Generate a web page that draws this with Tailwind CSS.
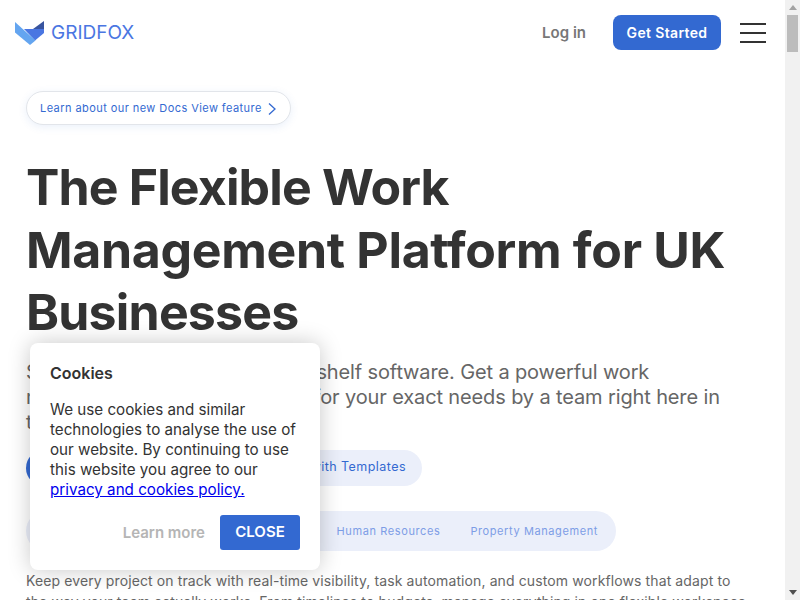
<!DOCTYPE html>
<html lang="en">
<head>
  <meta charset="UTF-8" />
  <title>Gridfox</title>
  <script src="https://cdn.jsdelivr.net/npm/@tailwindcss/browser@4"></script>
</head>
<body class="relative h-[600px] w-[800px] overflow-hidden bg-white font-['Inter',sans-serif] text-[#333]">
  <div class="h-[600px] w-[785px] overflow-hidden">
    <!-- nav -->
    <header class="flex h-[65px] items-center pl-[15px] pr-[19px]">
      <svg class="h-[24px] w-[29px]" viewBox="0 0 29 24">
        <polygon points="9,8 29,8 29,12 20,19.5" fill="#4a76e2" />
        <polygon points="18,8 29,0 29,8" fill="#38549f" />
        <polygon points="0,1 20.5,19.5 15,24 0,11.5" fill="#64a5f0" />
      </svg>
      <span class="ml-[7px] pt-[2px] text-[19px] text-[#4a76e2]">GRIDFOX</span>
      <a class="ml-auto pt-[1px] text-[15px] font-semibold text-[#777]">Log in</a>
      <a class="ml-[27px] flex h-[35px] w-[108px] items-center justify-center rounded-[8px] bg-[#3369d1] text-[14px] font-semibold tracking-[0.35px] text-white">Get Started</a>
      <div class="ml-[19px] flex w-[26px] flex-col gap-[7px]">
        <span class="h-[2px] bg-[#333]"></span>
        <span class="h-[2px] bg-[#333]"></span>
        <span class="h-[2px] bg-[#333]"></span>
      </div>
    </header>

    <main class="px-[26px] pt-[26px]">
      <a class="inline-flex h-[34px] items-center gap-[6px] rounded-full border border-[#e2e5ea] bg-white pl-[13px] pr-[14px] pt-[1px] text-[11px] tracking-[0.43px] text-[#3369d1] shadow-[0_2px_8px_rgba(51,105,209,0.1)]">
        Learn about our new Docs View feature
        <svg class="h-[12px] w-[8px]" viewBox="0 0 8 12" fill="none" stroke="#3369d1" stroke-width="1.3"><path d="M1 .5 7 6 1 11.5" /></svg>
      </a>

      <h1 class="mt-[31px] text-[50px] font-bold leading-[62.5px] text-[#333]">
        <span class="block tracking-[-0.86px]">The Flexible Work</span>
        <span class="block tracking-[-0.32px]">Management Platform for UK</span>
        <span class="block tracking-[-0.8px]">Businesses</span>
      </h1>

      <p class="mt-[16px] max-w-[700px] text-[20px] leading-[25px] tracking-[-0.13px] text-[#666]">Stop wrestling with old off-the-shelf software. Get a powerful work management platform, all built for your exact needs by a team right here in the UK.</p>

      <div class="mt-[15px] flex gap-[12px]">
        <a class="flex h-[36px] w-[170px] items-center justify-center rounded-full bg-[#3369d1] text-[13px] font-medium text-white">Book a Demo</a>
        <a class="flex h-[36px] w-[214px] items-center justify-end rounded-full bg-[#ebeffa] pr-[16px] text-[12.5px] tracking-[0.45px] text-[#3369d1]">Start with Templates</a>
      </div>

      <div class="mt-[25px] flex h-[40px] w-[590px] items-center justify-end gap-[30px] rounded-full bg-[#ebeffa] pr-[18px] pt-[1px] text-[11px] tracking-[0.6px] text-[#7d9de6]">
        <span>Human Resources</span>
        <span>Property Management</span>
      </div>

      <p class="mt-[19px] max-w-[729px] text-[14px] leading-[21px] tracking-[0.11px] text-[#666]">Keep every project on track with real-time visibility, task automation, and custom workflows that adapt to the way your team actually works. From timelines to budgets, manage everything in one flexible workspace.</p>
    </main>
  </div>

  <!-- scrollbar -->
  <div class="absolute right-0 top-0 flex h-[600px] w-[15px] flex-col items-center bg-[#f1f1f1]">
    <span class="mt-[5px] h-0 w-0 border-x-[4px] border-b-[5px] border-x-transparent border-b-[#a3a3a3]"></span>
    <span class="mt-[5px] h-[37px] w-[11px] bg-[#bcbcbc]"></span>
    <span class="mt-auto mb-[5px] h-0 w-0 border-x-[4px] border-t-[5px] border-x-transparent border-t-[#505050]"></span>
  </div>

  <!-- cookie dialog -->
  <div class="absolute left-[30px] top-[343px] h-[227px] w-[290px] rounded-[8px] bg-white px-[20px] pt-[20px] shadow-[0_0_22px_rgba(0,0,0,0.22)]">
    <h2 class="text-[16px] font-semibold leading-[20px] text-[#333]">Cookies</h2>
    <p class="mt-[17px] text-[15.2px] leading-[20px] text-[#333]">We use cookies and similar technologies to analyse the use of our website. By continuing to use this website you agree to our <a class="text-[#0000ee] underline">privacy and cookies policy.</a></p>
    <div class="mt-[15px] flex items-center justify-end gap-[15px]">
      <a class="pt-[2px] text-[15px] font-semibold text-[#b5b5b5]">Learn more</a>
      <a class="flex h-[35px] w-[80px] items-center justify-center rounded-[3px] bg-[#3369d1] text-[15px] font-semibold text-white">CLOSE</a>
    </div>
  </div>
</body>
</html>
